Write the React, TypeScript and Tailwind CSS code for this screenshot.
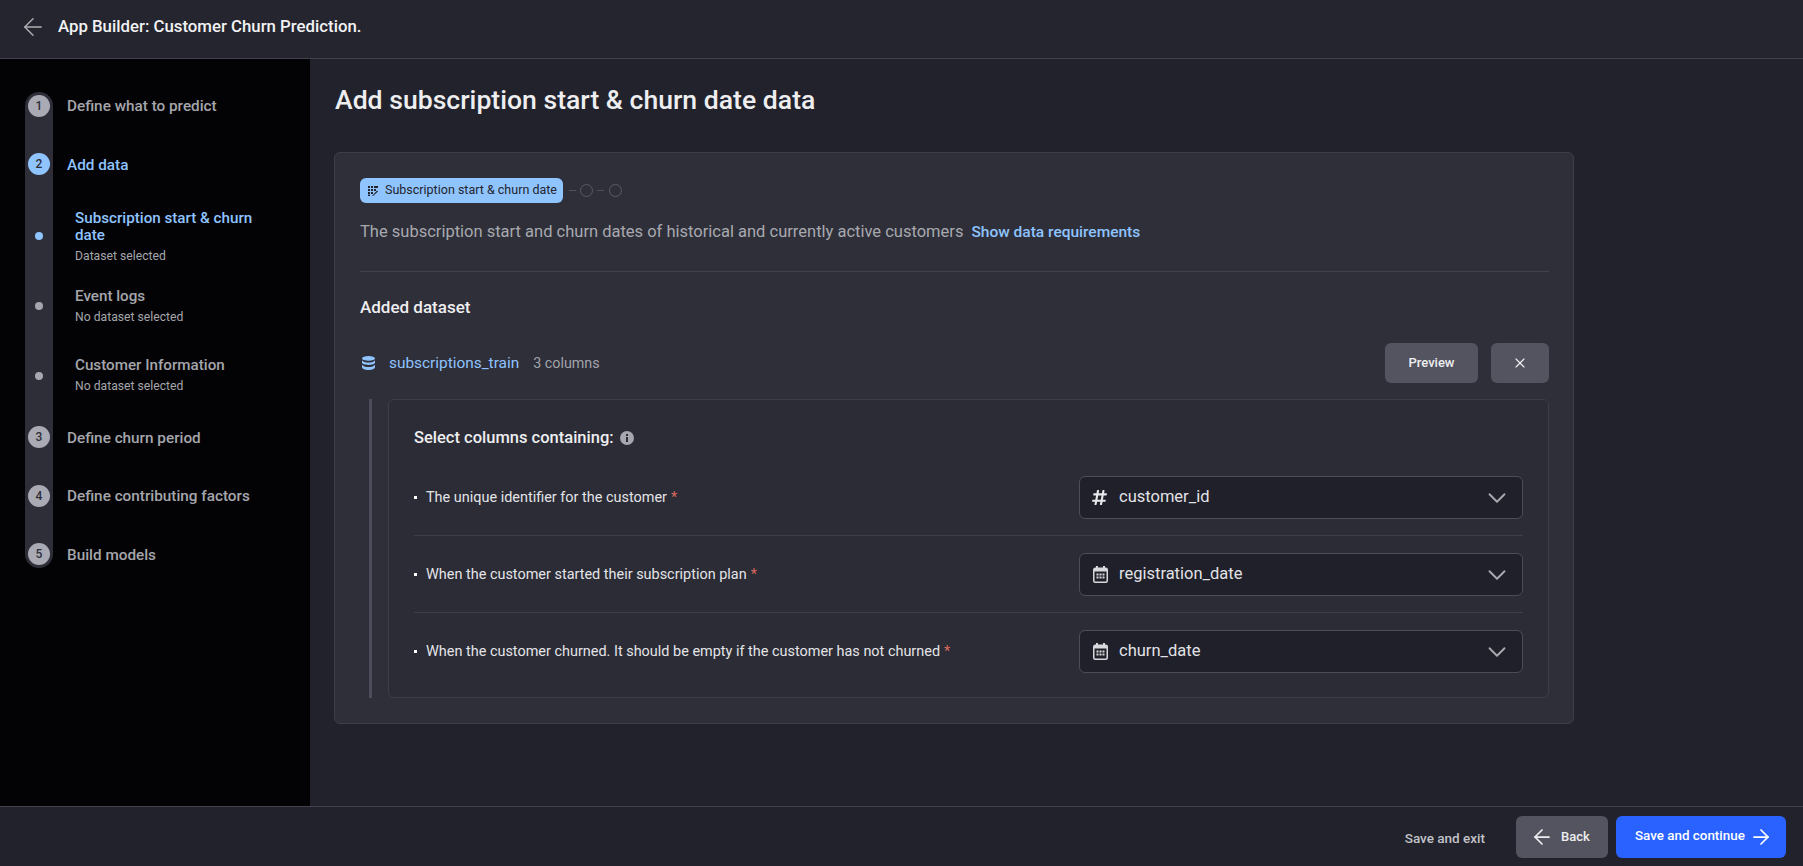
import { ArrowLeft, ArrowRight, ChevronDown, X } from "lucide-react";
import { FaHashtag } from "react-icons/fa";

function TrackCell({ className, children }: { className?: string; children: React.ReactNode }) {
  return <div className={"w-[28px] shrink-0 box-border bg-[#2d2e38] flex items-center justify-center " + (className || "")}>{children}</div>;
}

function Step({ n, label, active, h, pad }: { n: number; label: string; active?: boolean; h: string; pad?: string }) {
  return (
    <div className={"flex ml-[25px] " + h}>
      <TrackCell className={(n === 1 ? "rounded-t-[14px] " : n === 5 ? "rounded-b-[14px] " : "") + (pad || "")}>
        <span className={"w-[22px] h-[22px] rounded-full flex items-center justify-center text-[12px] font-medium text-[#2d2e38] " + (active ? "bg-[#8fc4ff]" : "bg-[#a9aab4]")}>{n}</span>
      </TrackCell>
      <div className={"ml-[14px] box-border flex items-center text-[15.3px] font-medium " + (n > 1 ? "translate-y-[1px] " : "") + (active ? "text-[#8fc4ff] " : "text-[#a5a6ac] ") + (pad || "")}>{label}</div>
    </div>
  );
}

function Sub({ title, note, active, h, pad }: { title: string; note: string; active?: boolean; h: string; pad?: string }) {
  return (
    <div className={"flex ml-[25px] " + h}>
      <TrackCell className={pad}>
        <span className={"w-[8px] h-[8px] rounded-full " + (active ? "bg-[#8fc4ff]" : "bg-[#a5a6ae]")} />
      </TrackCell>
      <div className={"ml-[22px] w-[195px] box-border flex flex-col justify-center " + (active ? "pt-[2px] " : "") + (pad || "")}>
        <div className={"text-[15.2px] leading-[17px] font-medium " + (active ? "text-[#8fc4ff]" : "text-[#a5a6ac]")}>{title}</div>
        <div className="mt-[4px] text-[12.2px] leading-[16px] text-[#a5a6ac]">{note}</div>
      </div>
    </div>
  );
}

function CalendarIcon() {
  return (
    <svg width="15" height="17" viewBox="0 0 15 17" className="shrink-0">
      <rect x="3" y="0" width="2" height="4" fill="#d8d9dd" />
      <rect x="10" y="0" width="2" height="4" fill="#d8d9dd" />
      <rect x="0.75" y="2.25" width="13.5" height="14" rx="1.5" fill="none" stroke="#d8d9dd" strokeWidth="1.5" />
      <rect x="1" y="2.5" width="13" height="3" fill="#d8d9dd" />
      <g fill="#d8d9dd">
        <rect x="3.5" y="7.5" width="2" height="2" />
        <rect x="6.5" y="7.5" width="2" height="2" />
        <rect x="9.5" y="7.5" width="2" height="2" />
        <rect x="3.5" y="10.5" width="2" height="2" />
        <rect x="6.5" y="10.5" width="2" height="2" />
        <rect x="9.5" y="10.5" width="2" height="2" />
      </g>
    </svg>
  );
}

function Row({ label, value, icon, last }: { label: string; value: string; icon: React.ReactNode; last?: boolean }) {
  return (
    <div className={"flex items-center justify-between " + (last ? "" : "pb-[16px] mb-[17px] border-b border-[#3d3e4a]")}>
      <div className="flex items-center text-[14.45px] text-[#e4e4e8]">
        <span className="w-[3px] h-[3px] bg-white mr-[9px]" />
        <span>{label}</span>
        <span className="ml-[4px] text-[#d9695f]">*</span>
      </div>
      <div className="w-[444px] h-[43px] rounded-[6px] border border-[#4c4d5a] bg-[#1f2029] flex items-center pl-[13px] pr-[10px]">
        <span className="w-[15px] flex justify-center">{icon}</span>
        <span className="ml-[11px] text-[16.5px] text-[#e2e2e6] flex-1">{value}</span>
        <ChevronDown size={30} strokeWidth={1.5} className="text-[#a9aab0]" />
      </div>
    </div>
  );
}

export default function App() {
  return (
    <div className="w-[1803px] h-[866px] flex flex-col overflow-hidden bg-[#21222b] text-white [font-family:Roboto,sans-serif]">
      <header className="h-[59px] shrink-0 bg-[#24252e] border-b border-[#41424d] flex items-center pl-[19px] pb-[4px]">
        <ArrowLeft size={28} strokeWidth={1.25} className="text-[#aeaeb2]" />
        <h1 className="ml-[11px] text-[16.8px] font-medium text-[#f2f2f4]">App Builder: Customer Churn Prediction.</h1>
      </header>

      <div className="flex flex-1 min-h-0">
        <aside className="w-[310px] shrink-0 bg-[#030305] pt-[33px]">
          <Step n={1} label="Define what to predict" h="h-[43px]" pad="pb-[15px]" />
          <Step n={2} label="Add data" active h="h-[58px]" />
          <Sub title="Subscription start & churn date" note="Dataset selected" active h="h-[86px]" />
          <Sub title="Event logs" note="No dataset selected" h="h-[54px]" />
          <Sub title="Customer Information" note="No dataset selected" h="h-[75px]" pad="pt-[10px]" />
          <Step n={3} label="Define churn period" h="h-[58px]" />
          <Step n={4} label="Define contributing factors" h="h-[59px]" />
          <Step n={5} label="Build models" h="h-[43px]" pad="pt-[15px]" />
        </aside>

        <main className="flex-1 pl-[24px] pt-[24px]">
          <h2 className="ml-[1px] text-[26.6px] leading-[34px] font-medium text-[#eeeef0]">Add subscription start &amp; churn date data</h2>
          <section className="mt-[35px] w-[1240px] rounded-[6px] border border-[#3d3e4a] bg-[#2e2f39] pl-[25px] pr-[24px] py-[25px]">
            <div className="flex items-center h-[25px]">
              <div className="h-[25px] w-[203px] rounded-[6px] bg-[#8fc4ff] flex items-center pl-[8px] text-[12.5px] text-[#23242c]">
                <svg width="10" height="10" viewBox="0 0 10 10" fill="#23242c" className="mr-[7px]">
                  <rect x="0" y="0" width="2" height="2" /><rect x="3" y="0" width="2" height="2" /><rect x="6" y="0" width="2" height="2" /><rect x="8" y="0" width="2" height="2" />
                  <rect x="0" y="3" width="2" height="2" /><rect x="3" y="3" width="2" height="2" /><rect x="6" y="3" width="2" height="2" />
                  <rect x="0" y="6" width="2" height="2" /><rect x="3" y="6" width="2" height="2" />
                  <rect x="0" y="8.5" width="2" height="1.5" />
                  <path d="M4 10 L9 4.5 L10 5.5 L5 10 Z" />
                </svg>
                Subscription start &amp; churn date
              </div>
              <span className="ml-[6px] w-[7px] h-px bg-[#4f505c]" />
              <span className="ml-[4px] w-[13px] h-[13px] rounded-full border border-[#5a5b67]" />
              <span className="ml-[4px] w-[7px] h-px bg-[#4f505c]" />
              <span className="ml-[5px] w-[13px] h-[13px] rounded-full border border-[#5a5b67]" />
            </div>

            <div className="mt-[17px] flex items-center h-[24px] pt-[1px] text-[16.5px] text-[#a8a9af]">
              <span>The subscription start and churn dates of historical and currently active customers</span>
              <span className="ml-[8px] text-[15.5px] font-medium text-[#8fc4ff]">Show data requirements</span>
            </div>

            <div className="mt-[27px] border-t border-[#41424d]" />

            <h3 className="mt-[22px] text-[17px] leading-[26px] font-medium text-[#eeeef0]">Added dataset</h3>

            <div className="mt-[23px] flex items-center justify-between h-[40px]">
              <div className="flex items-center pt-[1px]">
                <svg width="13" height="14" viewBox="0 0 13 14" fill="#8fc4ff" className="ml-[2px]">
                  <ellipse cx="6.5" cy="2.4" rx="6.5" ry="2.4" />
                  <path d="M0 4.3C1 6 3.5 6.6 6.5 6.6S12 6 13 4.3V6.6C13 8 10 9 6.5 9S0 8 0 6.6Z" />
                  <path d="M0 8.7C1 10.4 3.5 11 6.5 11S12 10.4 13 8.7V11.3C13 12.8 10 14 6.5 14S0 12.8 0 11.3Z" />
                </svg>
                <span className="ml-[14px] text-[15.4px] text-[#8fc4ff]">subscriptions_train</span>
                <span className="ml-[14px] text-[14.3px] text-[#a2a3aa]">3 columns</span>
              </div>
              <div className="flex gap-[13px]">
                <button className="w-[93px] h-[40px] rounded-[6px] bg-[#53545f] flex items-center justify-center text-[13px] font-medium text-[#eeeef0] pb-[1px]">Preview</button>
                <button className="w-[58px] h-[40px] rounded-[6px] bg-[#53545f] flex items-center justify-center text-[#eeeef0]"><X size={16} strokeWidth={1.75} /></button>
              </div>
            </div>

            <div className="mt-[16px] flex h-[299px]">
              <div className="ml-[9px] w-[3px] bg-[#4c4d5a]" />
              <div className="ml-[16px] flex-1 rounded-[6px] border border-[#3d3e4a] bg-[#2b2c35] px-[25px] pt-[26px]">
                <div className="flex items-center h-[24px] text-[16.5px] font-medium text-[#eeeef0]">
                  Select columns containing:
                  <svg width="14" height="14" viewBox="0 0 14 14" className="ml-[6px]">
                    <circle cx="7" cy="7" r="7" fill="#a5a6ae" />
                    <rect x="6" y="6" width="2" height="5" fill="#2b2c35" />
                    <rect x="6" y="3" width="2" height="2" fill="#2b2c35" />
                  </svg>
                </div>
                <div className="mt-[26px]">
                  <Row label="The unique identifier for the customer" value="customer_id" icon={<FaHashtag size={17} className="text-[#e8e8ec] -translate-x-[1px]" />} />
                  <Row label="When the customer started their subscription plan" value="registration_date" icon={<CalendarIcon />} />
                  <Row label="When the customer churned. It should be empty if the customer has not churned" value="churn_date" icon={<CalendarIcon />} last />
                </div>
              </div>
            </div>
          </section>
        </main>
      </div>

      <footer className="h-[60px] shrink-0 bg-[#21222b] border-t border-[#41424d] flex items-center justify-end pr-[17px]">
        <span className="mt-[4px] text-[13.5px] font-medium text-[#c2c3c9]">Save and exit</span>
        <button className="ml-[31px] w-[92px] h-[42px] rounded-[6px] bg-[#53545f] flex items-center justify-center gap-[7px] pr-[4px] text-[13px] font-medium text-[#eeeef0]">
          <ArrowLeft size={24} strokeWidth={1.75} />
          Back
        </button>
        <button className="ml-[8px] w-[170px] h-[42px] rounded-[6px] bg-[#2962ff] flex items-center pl-[19px] gap-[4px] text-[13.4px] font-medium text-white">
          Save and continue
          <ArrowRight size={24} strokeWidth={1.75} />
        </button>
      </footer>
    </div>
  );
}
